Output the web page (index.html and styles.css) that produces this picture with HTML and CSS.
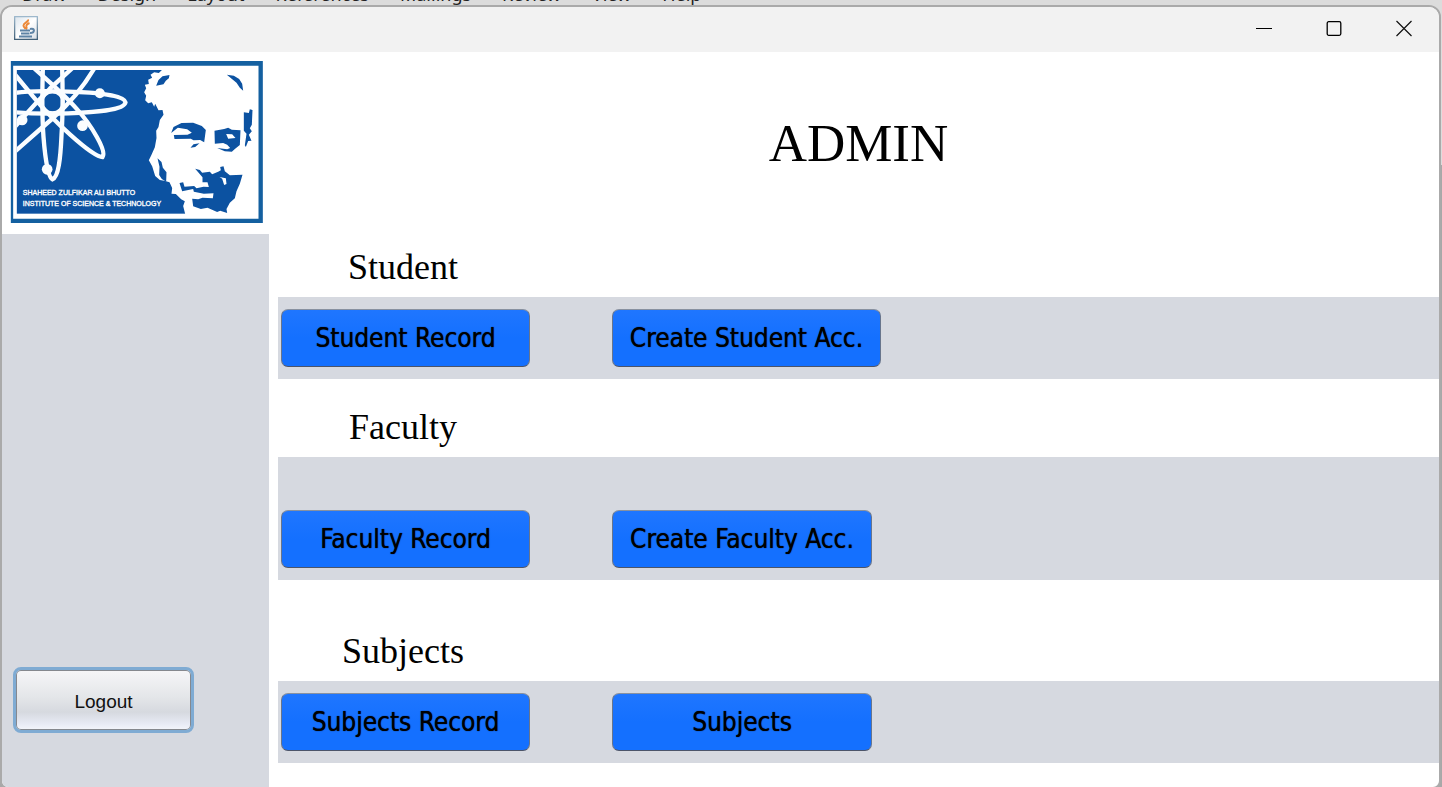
FILE: index.html
```html
<!DOCTYPE html>
<html lang="en">
<head>
<meta charset="utf-8">
<title>Admin</title>
<link rel="stylesheet" href="styles.css">
</head>
<body>
<nav class="ribbon">
  <span>Draw</span><span>Design</span><span>Layout</span><span>References</span><span>Mailings</span><span>Review</span><span>View</span><span>Help</span>
</nav>
<div class="window">
  <header class="titlebar">
    <svg class="java-icon" viewBox="0 0 24 24" aria-hidden="true">
      <defs>
        <linearGradient id="jb" x1="0" y1="0" x2="0" y2="1"><stop offset="0" stop-color="#9db8cc"/><stop offset="1" stop-color="#426078"/></linearGradient>
        <linearGradient id="jf" x1="0" y1="0" x2="1" y2="1"><stop offset="0" stop-color="#dbe4ec"/><stop offset="0.5" stop-color="#fff"/><stop offset="1" stop-color="#d5dce4"/></linearGradient>
      </defs>
      <rect x="0.5" y="0.5" width="23" height="23" rx="1" fill="url(#jf)" stroke="url(#jb)" stroke-width="1.6"/>
      <path d="M14 3.500C15 6 9.500 6.500 9.500 9.500C9.500 11 11 12 11.500 13M15.500 7C13 8 11.800 9.500 12.500 11C13 12 12.500 12.700 12 13.500" fill="none" stroke="#ec8a3a" stroke-width="2"/>
      <path d="M6 14.500H16M7 17.500H15.500M5 20.500H18M16 13C21.500 11.500 21 17 16 17" fill="none" stroke="#5e83a5" stroke-width="2"/>
    </svg>
    <div class="controls">
      <button type="button" aria-label="Minimize"><svg viewBox="0 0 16 16"><path d="M0 8.500H16" stroke="#000" fill="none"/></svg></button>
      <button type="button" aria-label="Maximize"><svg viewBox="0 0 16 16"><rect x="1.200" y="1.700" width="13.600" height="13.600" rx="1.500" stroke="#000" stroke-width="1.300" fill="none"/></svg></button>
      <button type="button" aria-label="Close"><svg viewBox="0 0 16 16"><path d="M0.500 1L15.500 16M15.500 1L0.500 16" stroke="#111" stroke-width="1.200" fill="none"/></svg></button>
    </div>
  </header>
  <div class="content">
    <aside class="sidebar">
      <div class="brand">
        <svg class="logo" viewBox="31 27 758 486" role="img" aria-label="Shaheed Zulfikar Ali Bhutto Institute of Science and Technology">
          <path fill="#1460a0" fill-rule="evenodd" d="M33 27H789V513H33ZM40 41V500H776V41Z"/>
          <rect x="51" y="54" width="520" height="431" fill="#0c52a1"/>
          <clipPath id="panel"><rect x="51" y="54" width="520" height="431"/></clipPath>
          <g clip-path="url(#panel)">
            <g fill="none" stroke="#fafdff" stroke-width="13">
              <circle cx="158" cy="151" r="32" stroke-width="10"/>
              <path d="M45 123C90 115 150 117 205 119C290 121 374 130 377 151C374 176 280 181 205 184C150 186 90 185 45 181"/>
              <path d="M129 50C127 120 126 190 131 255C136 320 145 378 158 382C176 375 182 320 185 250C189 190 189 120 187 50"/>
              <path d="M44 66L105 140C150 195 275 315 308 315C322 298 275 220 230 170C190 125 140 82 104 50"/>
              <path d="M218 48L150 110C110 150 75 190 44 226M284 48C245 115 205 158 160 198C120 232 80 268 44 300"/>
            </g>
            <g fill="#fafdff">
              <circle cx="300" cy="124" r="15"/><circle cx="248" cy="221" r="16"/><circle cx="142" cy="352" r="16"/><circle cx="67" cy="204" r="16"/>
            </g>
          </g>
          <g transform="translate(405 0)">
            <path fill="#fff" d="M82 53L72 63 58 61 47 68 52 77 40 83 42 96 30 98 34 109 28 121 34 131 31 145 40 154 51 151 58 164 61 155 71 175 83 174 86 188 75 204 71 225 64 236 65 258 60 286 50 308 42 325 52 343 61 372 75 384 88 386 104 391 112 408 110 425 123 426 139 442 150 448 145 462 151 486H368V53Z"/>
            <g fill="#0c52a1">
              <path d="M64 101L71 84 83 73 104 69 102 79 93 86 86 97Z"/>
              <path d="M276 68L297 71 313 81 322 95 325 116 315 107 305 92Z"/>
              <path d="M327 181L342 183 345 172 353 174 351 218 345 229 351 238 342 248 350 266 340 267 333 285 330 280 335 245 327 236Z"/>
              <path d="M109 243L116 225 140 213 175 212 201 222 213 234 208 271 196 264 176 265 168 260 119 261 117 249 158 248 171 242 157 232 129 227Z"/>
              <path d="M167 287L176 277 194 274 181 285Z"/>
              <path fill-rule="evenodd" d="M239 236L268 231 280 227 291 233 317 235 315 279 300 291 291 299 270 298 247 288 277 292 286 288 277 278 265 273 240 275ZM274 246L280 260 302 258 292 247Z"/>
              <path d="M68 319L80 330 84 347 95 361 94 389 81 381 73 369 74 344Z"/>
              <path fill-rule="evenodd" d="M181 350L195 354 202 362 225 359 232 367 250 359 258 355 256 345 266 343 270 358 285 370 323 368 315 395 305 418 300 439 285 452 275 471 277 483 256 476 247 480 218 467 198 471 175 463 172 440 190 442 203 437 234 439 236 424 207 425 177 419 175 411 142 418 134 393 145 391 149 404 178 402 185 409 206 404 222 405 218 391 203 391 203 376ZM254 375L262 380 268 399 275 396 273 379Z"/>
            </g>
          </g>
          <g class="logo-text">
            <text x="69" y="430">SHAHEED ZULFIKAR ALI BHUTTO</text>
            <text x="69" y="461">INSTITUTE OF SCIENCE &amp; TECHNOLOGY</text>
          </g>
        </svg>
      </div>
      <div class="side-panel"><button type="button" class="logout">Logout</button></div>
    </aside>
    <main class="main">
      <h1>ADMIN</h1>
      <section>
        <h2>Student</h2>
        <div class="band"><button type="button" class="action">Student Record</button><button type="button" class="action wide">Create Student Acc.</button></div>
      </section>
      <section>
        <h2>Faculty</h2>
        <div class="band tall"><button type="button" class="action">Faculty Record</button><button type="button" class="action">Create Faculty Acc.</button></div>
      </section>
      <section class="spaced">
        <h2>Subjects</h2>
        <div class="band"><button type="button" class="action">Subjects Record</button><button type="button" class="action">Subjects</button></div>
      </section>
    </main>
  </div>
</div>
</body>
</html>
```
FILE: styles.css
```css
* { box-sizing: border-box; }
body {
  margin: 0;
  height: 100vh;
  overflow: hidden;
  background: linear-gradient(#dcdcdc 0 165px, #a8a8a8 165px);
}
.ribbon {
  display: flex;
  align-items: flex-end;
  gap: 31px;
  height: 5px;
  padding-left: 22px;
  font: 18px/20px "Noto Sans", sans-serif;
  color: #222;
}
.ribbon span { padding-bottom: 1px; }
.window {
  display: flex;
  flex-direction: column;
  height: calc(100vh - 3px);
  margin-right: 1px;
  border: 2px solid #aaa;
  border-radius: 12px 12px 8px 8px;
  background: #fff;
  overflow: hidden;
}
.titlebar {
  display: flex;
  flex: none;
  align-items: center;
  justify-content: space-between;
  height: 45px;
  padding: 0 0 3px 12px;
  background: #f2f2f2;
}
.java-icon { width: 24px; height: 24px; }
.controls { display: flex; }
.controls button {
  display: grid;
  place-items: center;
  width: 70px;
  height: 42px;
  padding: 0;
  border: 0;
  background: none;
}
.controls svg { width: 16px; height: 16px; overflow: visible; }
.content { display: flex; flex: 1; gap: 9px; min-height: 0; }
.sidebar { display: flex; flex-direction: column; width: 267px; flex: none; }
.brand { padding: 9px 6px 11px 8px; }
.logo { display: block; width: 253px; height: 162px; }
.logo-text { font: 21px "Liberation Sans", Arial, sans-serif; fill: #fff; stroke: #fff; stroke-width: 1px; }
.side-panel {
  display: flex;
  flex: 1;
  align-items: flex-end;
  padding: 0 11px 54px;
  background: #d6d9e0;
}
.logout {
  width: 181px;
  height: 66px;
  padding: 4px 0 0;
  border: 3px solid #7fabd3;
  border-radius: 8px;
  box-shadow: inset 0 0 0 1px #85888e;
  background: linear-gradient(#f6f6f8, #e4e6e9 45%, #d6d9df 70%, #e8ebf5 90%, #f4f6fc);
  font: 19px "Liberation Sans", Arial, sans-serif;
  color: #111;
}
.main { flex: 1; min-width: 0; }
h1, h2 { margin: 0; font-family: "Liberation Serif", "Times New Roman", serif; font-weight: 400; color: #000; text-align: center; }
h1 { height: 182px; font-size: 53px; line-height: 182px; }
h2 { width: 250px; height: 78px; padding-top: 28px; font-size: 36px; line-height: 40px; }
section:first-of-type h2 { height: 63px; padding-top: 13px; }
.spaced h2 { height: 101px; padding-top: 51px; }
.band {
  display: flex;
  gap: 82px;
  padding: 12px 3px;
  background: #d6d9e0;
}
.tall { padding-top: 53px; }
.action {
  width: 260px;
  height: 58px;
  padding: 0;
  border: 1px solid;
  border-color: #8891a0 #68758c #4c556a;
  border-radius: 7px;
  background: linear-gradient(#1f76ff, #1470ff 50%);
  font: 26px "DejaVu Sans Condensed", "DejaVu Sans", sans-serif;
  color: #000;
  text-shadow: 0 0 1px #000;
}
.action:first-child { width: 249px; }
.wide { width: 269px; }
```
